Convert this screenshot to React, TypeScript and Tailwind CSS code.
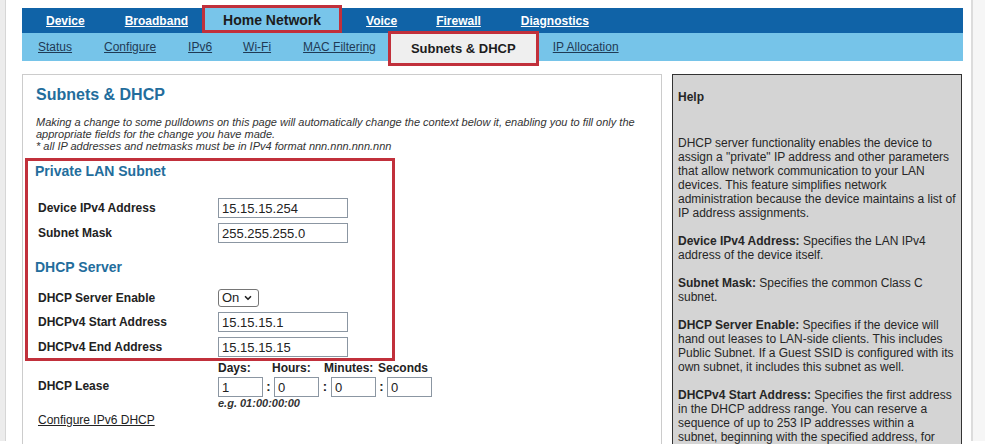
import { ChevronDown } from "lucide-react";

const TOP_LINKS_LEFT = [
  { label: "Device", ml: "ml-[24px]" },
  { label: "Broadband", ml: "ml-[40px]" },
];

const TOP_LINKS_RIGHT = [
  { label: "Voice", ml: "ml-[24px]" },
  { label: "Firewall", ml: "ml-[39px]" },
  { label: "Diagnostics", ml: "ml-[40px]" },
];

const SUB_LINKS = [
  { label: "Status", ml: "ml-[16px]" },
  { label: "Configure", ml: "ml-[32px]" },
  { label: "IPv6", ml: "ml-[32px]" },
  { label: "Wi-Fi", ml: "ml-[31px]" },
  { label: "MAC Filtering", ml: "ml-[32px]" },
];

function TextField({ value, className = "w-[130px]" }: { value: string; className?: string }) {
  return (
    <input
      type="text"
      defaultValue={value}
      className={`h-[20px] border border-[#8b96a2] bg-white pl-[3px] text-[13px] font-normal text-[#222] outline-none ${className}`}
    />
  );
}

function FormRow({ label, children }: { label: string; children: React.ReactNode }) {
  return (
    <div className="flex h-[20px] items-center pl-[10px]">
      <span className="w-[180px] text-[12px] font-bold text-[#222]">{label}</span>
      {children}
    </div>
  );
}

export default function App() {
  return (
    <div className="h-[444px] w-[985px] overflow-hidden bg-white font-['Liberation_Sans',Arial,sans-serif] text-[#222]">
      <div className="flex h-[441px]">
        <div className="w-[6px] border-r border-[#d6d6d6] bg-[#ececec]" />

        <div className="flex w-[965px] flex-col pl-[16px] pt-[8px]">
          {/* main menu */}
          <nav className="flex h-[25px] w-[941px] items-end bg-[#1063a7]">
            {TOP_LINKS_LEFT.map((l) => (
              <a key={l.label} href="#" className={`${l.ml} self-center text-[12px] font-bold text-white underline`}>
                {l.label}
              </a>
            ))}
            <div className="ml-[14px] flex h-[28px] w-[140px] items-center justify-center border-[3px] border-[#c1303b] bg-[#78c5ea] pt-[2px] text-[14px] font-bold text-[#1c1c1c]">
              Home Network
            </div>
            {TOP_LINKS_RIGHT.map((l) => (
              <a key={l.label} href="#" className={`${l.ml} self-center text-[12px] font-bold text-white underline`}>
                {l.label}
              </a>
            ))}
          </nav>

          {/* sub menu */}
          <nav className="flex h-[28px] w-[941px] items-start bg-[#76c4e9]">
            {SUB_LINKS.map((l) => (
              <a key={l.label} href="#" className={`${l.ml} self-center text-[12px] text-[#1f3a55] underline`}>
                {l.label}
              </a>
            ))}
            <div className="ml-[12px] mt-[-2px] flex h-[35px] w-[151px] items-center justify-center border-[3px] border-[#c1303b] bg-[#efefef] text-[13px] font-bold text-[#1c1c1c]">
              Subnets &amp; DHCP
            </div>
            <a href="#" className="ml-[14px] self-center text-[12px] text-[#1f3a55] underline">
              IP Allocation
            </a>
          </nav>

          <div className="mt-[13px] flex flex-1 gap-[10px]">
            {/* settings panel */}
            <section className="w-[640px] border border-[#cccccc] px-[13px] pt-[11px]">
              <h1 className="text-[16px] font-bold leading-[18px] text-[#236d9c]">Subnets &amp; DHCP</h1>
              <p className="mt-[12px] text-[11px] italic leading-[12px] text-[#333]">
                Making a change to some pulldowns on this page will automatically change the context below it, enabling you to fill only the appropriate fields for the change you have made.
                <br />* all IP addresses and netmasks must be in IPv4 format nnn.nnn.nnn.nnn
              </p>

              <div className="ml-[-11px] mt-[6px] w-[370px] border-[3px] border-[#c1303b] pb-[1px] pt-[2px]">
                <h2 className="ml-[7px] text-[14px] font-bold leading-[16px] text-[#236d9c]">Private LAN Subnet</h2>
                <div className="mt-[19px] flex flex-col gap-[5px]">
                  <FormRow label="Device IPv4 Address">
                    <TextField value="15.15.15.254" />
                  </FormRow>
                  <FormRow label="Subnet Mask">
                    <TextField value="255.255.255.0" />
                  </FormRow>
                </div>

                <h2 className="ml-[7px] mt-[16px] text-[14px] font-bold leading-[16px] text-[#236d9c]">DHCP Server</h2>
                <div className="mt-[13px]">
                  <FormRow label="DHCP Server Enable">
                    <div className="relative h-[18px] w-[41px]">
                      <select
                        defaultValue="on"
                        className="block h-[18px] w-[41px] appearance-none rounded-[3px] border border-[#767676] bg-white py-0 pl-[3px] text-[13px] leading-[16px] text-[#222] outline-none"
                      >
                        <option value="on">On</option>
                        <option value="off">Off</option>
                      </select>
                      <ChevronDown size={10} strokeWidth={4} className="pointer-events-none absolute right-[6px] top-[4px] text-[#222]" />
                    </div>
                  </FormRow>
                </div>
                <div className="mt-[4px] flex flex-col gap-[5px]">
                  <FormRow label="DHCPv4 Start Address">
                    <TextField value="15.15.15.1" />
                  </FormRow>
                  <FormRow label="DHCPv4 End Address">
                    <TextField value="15.15.15.15" />
                  </FormRow>
                </div>
              </div>

              {/* lease time */}
              <div className="flex items-center">
                <span className="w-[182px] pl-[2px] text-[12px] font-bold text-[#222]">DHCP Lease</span>
                <div>
                  <div className="flex text-[12px] font-bold leading-[14px] text-[#222]">
                    <span className="w-[54px]">Days:</span>
                    <span className="w-[52px]">Hours:</span>
                    <span className="w-[54px]">Minutes:</span>
                    <span>Seconds</span>
                  </div>
                  <div className="mt-[2px] flex items-center text-[13px] font-bold">
                    <TextField value="1" className="w-[45px]" />
                    <span className="w-[11px] text-center">:</span>
                    <TextField value="0" className="w-[45px]" />
                    <span className="w-[12px] text-center">:</span>
                    <TextField value="0" className="w-[45px]" />
                    <span className="w-[11px] text-center">:</span>
                    <TextField value="0" className="w-[45px]" />
                  </div>
                  <div className="text-[11px] font-bold italic leading-[13px] text-[#333]">e.g. 01:00:00:00</div>
                </div>
              </div>
              <a href="#" className="ml-[2px] mt-[3px] block text-[12px] leading-[14px] text-[#222] underline">
                Configure IPv6 DHCP
              </a>
            </section>

            {/* help sidebar */}
            <aside className="w-[290px] border border-[#333] bg-[#d4d4d4] pl-[5px] pr-[5px] pt-[15px] text-[12px] leading-[14px] text-[#262626]">
              <div className="font-bold">Help</div>
              <p className="mt-[32px]">
                DHCP server functionality enables the device to assign a "private" IP address and other parameters that allow network communication to your LAN devices. This feature simplifies network administration because the device maintains a list of IP address assignments.
              </p>
              <p className="mt-[14px]">
                <b>Device IPv4 Address:</b> Specifies the LAN IPv4 address of the device itself.
              </p>
              <p className="mt-[14px]">
                <b>Subnet Mask:</b> Specifies the common Class C subnet.
              </p>
              <p className="mt-[14px]">
                <b>DHCP Server Enable:</b> Specifies if the device will hand out leases to LAN-side clients. This includes Public Subnet. If a Guest SSID is configured with its own subnet, it includes this subnet as well.
              </p>
              <p className="mt-[14px]">
                <b>DHCPv4 Start Address:</b> Specifies the first address in the DHCP address range. You can reserve a sequence of up to 253 IP addresses within a subnet, beginning with the specified address, for dynamic assignment.
              </p>
            </aside>
          </div>
        </div>

        <div className="w-[2px] bg-[#dcdcdc]" />
        <div className="flex-1 bg-[#f6f6f6]" />
      </div>
    </div>
  );
}
